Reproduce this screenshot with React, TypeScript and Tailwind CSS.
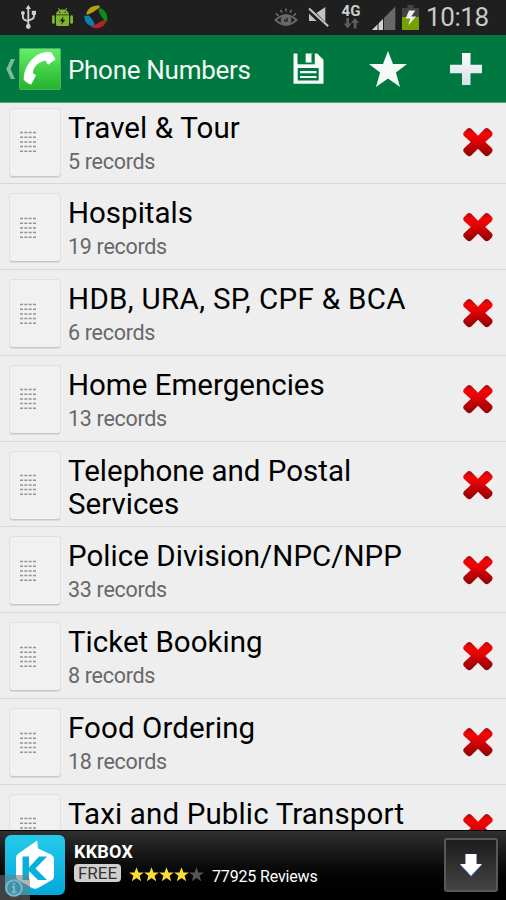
type Category = {
  title: string;
  records?: number;
  tracking?: string;
};

const CATEGORIES: Category[] = [
  { title: 'Travel & Tour', records: 5, tracking: 'tracking-[0.12px]' },
  { title: 'Hospitals', records: 19 },
  { title: 'HDB, URA, SP, CPF & BCA', records: 6, tracking: 'tracking-[0.34px]' },
  { title: 'Home Emergencies', records: 13 },
  { title: 'Telephone and Postal Services' },
  { title: 'Police Division/NPC/NPP', records: 33, tracking: 'tracking-[0.04px]' },
  { title: 'Ticket Booking', records: 8 },
  { title: 'Food Ordering', records: 18, tracking: 'tracking-[0.1px]' },
  { title: 'Taxi and Public Transport', tracking: 'tracking-[0.14px]' },
];

export default function App() {
  return (
    <div className="flex h-[900px] w-[506px] flex-col overflow-hidden bg-[#eeeeee] font-['Roboto',sans-serif]">
      <StatusBar />
      <ActionBar />
      <main className="min-h-0 flex-1 overflow-hidden">
        <ul className="-mt-[4.5px]">
          {CATEGORIES.map((c) => (
            <CategoryRow key={c.title} category={c} />
          ))}
        </ul>
      </main>
      <AdBanner />
    </div>
  );
}

function StatusBar() {
  return (
    <div className="flex h-[35px] shrink-0 items-start bg-[#1f1f1f]">
      {/* USB */}
      <svg className="mt-1 ml-5 h-[26px] w-[17px]" viewBox="0 0 17 26" fill="none" stroke="#cfcfcf">
        <path d="M8.3 4v18M2.9 10v3.2q0 2 2 2.8l3.4 1.5M13.9 10v2.6q0 2-2 2.6l-3.6 1.4" strokeWidth="1.9" />
        <path d="M8.3 .8 11 5H5.6z" fill="#cfcfcf" stroke="none" />
        <circle cx="8.3" cy="22.5" r="2.4" fill="#cfcfcf" stroke="none" />
        <circle cx="2.9" cy="9" r="1.9" fill="#cfcfcf" stroke="none" />
        <path d="M11.8 6.8h4.2v4h-4.2z" fill="#cfcfcf" stroke="none" />
      </svg>
      {/* Android battery helper */}
      <svg className="mt-2 ml-[15px] h-5 w-[21px]" viewBox="0 0 21 20" fill="#7fb52b">
        <path d="M4 6.5C4.2 3.6 6.8 1.5 10.5 1.5s6.3 2.1 6.5 5zM4 7.3h13v9.2q0 1.5-1.5 1.5h-10Q4 18 4 16.5z" />
        <rect x="0" y="7.3" width="2.8" height="8.5" rx="1.4" />
        <rect x="18.2" y="7.3" width="2.8" height="8.5" rx="1.4" />
        <path d="m6.3 0 1.5 2.5M14.7 0l-1.5 2.5" stroke="#7fb52b" />
        <circle cx="7.7" cy="4.3" r=".7" fill="#1f1f1f" />
        <circle cx="13.3" cy="4.3" r=".7" fill="#1f1f1f" />
        <path d="m11.4 8.5-3.6 4.7h2.3l-.8 3.6 4-5h-2.4z" fill="#172007" />
      </svg>
      {/* Colour swirl */}
      <svg className="mt-[5px] ml-[11px] h-6 w-6" viewBox="0 0 24 24">
        <path d="M2.3 9.5C3 3.5 8.5.2 15 .5c1.2.2 1 1.8-.2 2.700C10.500 5.500 7.500 9.300 2.300 9.500z" fill="#bd9d12" />
        <path d="M15.7 3.2c5.6 1 8.3 6.500 7.500 12-.4 1.600-2 1.800-2.900.5-1.700-3.600-4.400-5.400-5.500-9.800-.2-1.200.1-2.200.9-2.700z" fill="#0a8e19" />
        <path d="M.4 10.5c1.3 1 3.4-.6 4.900.4 2.600 1.900 3.400 4.600 5.100 7.500.9 1.700-.3 3-1.700 2.800C3.500 20.500-.2 16 .4 10.500z" fill="#0b80b0" />
        <path d="M20.5 15.5c1.700.5 1.500 2.500.1 4.100-3.200 3.800-8.900 4.800-12.900 2.600-.8-.6-.2-1.500.8-1.500 4.500-.2 7.200-5.200 12-5.200z" fill="#bb2226" />
      </svg>

      {/* Smart stay eye */}
      <svg className="mt-2 ml-auto h-5 w-6" viewBox="0 0 24 20" fill="none" stroke="#696969">
        <path d="M1.500 12Q12 2.500 22.500 12 12 21.500 1.500 12z" strokeWidth="1.8" />
        <circle cx="12" cy="11.8" r="3.7" strokeWidth="3.2" />
        <path d="m9.800 9.300 2.700 2.700M2 5.500l2.500 2.300M6.500 2 8 4.700M12 .5v3M17.500 2 16 4.700M22 5.500l-2.500 2.300" strokeWidth="1.7" />
      </svg>
      {/* Muted speaker */}
      <svg className="mt-[6px] ml-[9px] h-[23px] w-6" viewBox="0 0 24 23">
        <path d="M2 7h7.5l8.800-6v20l-8.800-6H2z" fill="#c2c2c2" />
        <path d="M.5 2 21 22.500" stroke="#1f1f1f" strokeWidth="5.500" />
        <path d="m2 2.500 19.200 17.700" stroke="#c2c2c2" strokeWidth="2.200" />
      </svg>
      <div className="mt-[5px] ml-[9px] flex w-[22px] flex-col items-center">
        <span className="text-[15px] leading-[13px] font-bold text-[#d0d0d0]">4G</span>
        <svg className="h-[11px] w-[15px]" viewBox="0 0 15 11" fill="#5d5d5d">
          <path d="M2.300 0h2.800v5.500h2.600L3.700 10.500-.3 5.500h2.600zM9.700 10.500h2.800V5h2.600L11 0 7 5h2.700z" />
        </svg>
      </div>
      {/* Signal */}
      <svg className="mt-[6px] ml-[10px] h-6 w-6" viewBox="0 0 24 24">
        <path d="M0 24 23.3.5V24z" fill="#686868" />
        <path d="M0 24 11 13v11z" fill="#d2d2d2" />
        <path d="M6 17v7M11.500 12v12" stroke="#1f1f1f" strokeWidth="1" />
      </svg>
      {/* Battery */}
      <svg className="mt-[5px] ml-[6px] h-[25px] w-[17px]" viewBox="0 0 17 25">
        <path d="M5.5 0h6v3H17v9H0V3h5.500z" fill="#434343" />
        <path d="M0 12h17v13H0z" fill="#75a202" />
        <path d="m7 5.500-3.300 8h4.600l-2 6.800 7.800-8.800H9.300l4-6z" fill="#eee" />
      </svg>
      <span className="mt-[4px] mr-[17px] ml-[7px] w-[63px] text-[26px] leading-[26px] tracking-[-0.4px] text-[#c9c9c9]">
        10:18
      </span>
    </div>
  );
}

function ActionBar() {
  return (
    <header className="flex h-[68px] shrink-0 items-center border-b border-[#5e9e7b] bg-[#007940]">
      <svg className="ml-[6px] h-5 w-[10px]" viewBox="0 0 10 20">
        <path d="M5 0h4L4.6 10 9 20H5L.3 10z" fill="#7ebb9e" />
      </svg>
      <svg className="mt-[1px] ml-[3px] h-[42px] w-[42px]" viewBox="0 0 42 42">
        <defs>
          <linearGradient id="call" x2="0" y2="1">
            <stop stopColor="#64f069" />
            <stop offset="1" stopColor="#24b22b" />
          </linearGradient>
        </defs>
        <rect x=".5" y=".5" width="41" height="41" rx="1" fill="url(#call)" stroke="#58a966" />
        {/* handset: thin curved grip with an ear piece at each end */}
        <path
          d="M5 28C5.500 19.500 12.500 9 21.500 5.500 25 4.200 29 3.600 32.500 4.400l4 7.100-7.500 5.300-2.700-4.300c-3.300.8-6.600 2.400-8.800 4.600-2.200 2.300-3.500 4.900-3.700 7.900l3.200 2.400-5 9.300c-2.500-.8-5.600-2.800-7.300-4.900q-.2-2 .3-3.800z"
          fill="#fff"
        />
      </svg>
      <h1 className="mt-[3px] ml-[7px] text-[26px] tracking-[-0.3px] text-[#f4f8f5]">Phone Numbers</h1>
      <div className="mr-[24px] ml-auto flex items-center">
        <svg className="mr-[1px] h-[31px] w-[31px]" viewBox="0 0 31 31">
          <path d="M.5.5h4.200V10h17V.5h2.500l6.300 6.300v24H.5z" fill="#f5faf8" />
          <path d="M12.500.5h7V10h-7z" fill="#f5faf8" />
          <path d="M4.700 0h7.600v9.500H4.700zM18.500 1h2.700v8h-2.700z" fill="#007940" />
          <path d="M4.700 9.500h17v1.800h-17z" fill="#007940" />
          <path d="M4.700 15h21v12.500h-21z" fill="#007940" />
          <path d="M7 19.200h16.500M7 24h16.500" stroke="#f5faf8" strokeWidth="2.200" />
        </svg>
        <svg className="ml-[44px] h-[36px] w-[38px]" viewBox="0 0 38 36">
          <path d="m19 0 5 13h14L26.900 21.600 31 36 19 27.500 7 36l4.100-14.400L0 13h14z" fill="#f5faf8" />
        </svg>
        <svg className="mt-[1px] ml-[43px] h-8 w-8" viewBox="0 0 32 32">
          <defs>
            <linearGradient id="plus" x2="0" y2="1">
              <stop stopColor="#fbfcfd" />
              <stop offset="1" stopColor="#d8e0e9" />
            </linearGradient>
          </defs>
          <path d="M12 0h8.500v11.800H32v8.500H20.500V32H12V20.300H0v-8.500h12z" fill="url(#plus)" />
        </svg>
      </div>
    </header>
  );
}

function CategoryRow({ category: c }: { category: Category }) {
  return (
    <li className="flex h-[85.8px] items-start overflow-hidden border-b border-[#d8d8d8]">
      <DragHandle />
      <div className="mt-[13px] ml-[7px] w-[350px] shrink-0">
        <div className={`text-[29.5px] leading-[33px] text-black ${c.tracking ?? ''}`}>{c.title}</div>
        {c.records !== undefined && (
          <div className="mt-[4px] text-[21.5px] leading-[26px] tracking-[-0.3px] text-[#686868]">
            {c.records} records
          </div>
        )}
      </div>
      <svg className="mt-[27px] mr-[12px] ml-auto h-8 w-8" viewBox="0 0 32 32">
        <defs>
          <linearGradient id="cross" x2="0" y2="1">
            <stop stopColor="#a80d10" />
            <stop offset=".2" stopColor="#f20606" />
            <stop offset=".4" stopColor="#e80406" />
            <stop offset=".65" stopColor="#bf0306" />
            <stop offset="1" stopColor="#900306" />
          </linearGradient>
        </defs>
        <path
          d="M2 6 5 3Q7.200 1 9.500 3L16 9.700 22.500 3Q24.800 1 27 3l3 3q1.700 2.200-.3 4.300L23.200 16l6.500 6q2 2.200.3 4.300l-3 2.900q-2.200 2-4.500 0L16 22.700l-6.500 6.500q-2.300 2-4.500 0l-3-2.900Q.3 24.200 2.300 22l6.500-6-6.500-5.700Q.3 8.200 2 6z"
          fill="url(#cross)"
        />
      </svg>
    </li>
  );
}

function DragHandle() {
  return (
    <div className="mt-[9px] ml-[9px] flex h-[69px] w-[52px] shrink-0 items-center rounded-[4px] border border-[#e0e0e0] border-b-[#c6c6c6] bg-[#f1f1f1] shadow-[0_1px_0_#dadada]">
      <svg className="ml-[10px] h-[22px] w-[16px]" viewBox="0 0 16 22" stroke="#949494" strokeWidth="1.5">
        {[1.5, 6.2, 10.9, 15.6, 20.3].map((y) => (
          <path key={y} d={`M0 ${y}h16`} strokeDasharray="3 1.33" />
        ))}
      </svg>
    </div>
  );
}

function AdBanner() {
  return (
    <footer className="relative flex h-[70px] shrink-0 items-start border-t border-black bg-linear-to-b from-[#303030] to-black text-white">
      <svg className="mt-[4px] ml-[5px] h-[60px] w-[60px]" viewBox="0 0 60 60">
        <defs>
          <linearGradient id="kk" x2="0" y2="1">
            <stop stopColor="#25caea" />
            <stop offset="1" stopColor="#02a9d9" />
          </linearGradient>
        </defs>
        <rect width="60" height="60" rx="6" fill="url(#kk)" />
        <path d="M32.200 5.500 33 13.500l13.500 6.200q2.500 1.300 2.500 4.300v17q0 3-2.500 4.300L33 53q-3 1.500-6 0l-13.500-7.700Q11 44 11 41V23q0-3 2.500-4.500z" fill="#fff" />
        <path d="M17.500 21.500h6.500v11L34 21.500h8L30.500 33.500 42 45h-9l-9-9v9h-6.500z" fill="#08b0dc" />
      </svg>
      <div className="mt-[10px] ml-[9px]">
        <div className="text-[18px] leading-[22px] font-bold tracking-[0.2px]">KKBOX</div>
        <div className="flex items-start">
          <span className="mt-[1px] h-[18px] w-[47px] rounded-[4px] bg-[#cfcfcf] text-center text-[17px] leading-[19px] text-[#333]">
            FREE
          </span>
          <div className="mt-[4px] ml-[8px] flex">
            {[0, 1, 2, 3, 4].map((n) => (
              <Star key={n} filled={n < 4} />
            ))}
          </div>
          <span className="mt-[4.500px] ml-[8px] text-[16px] leading-[18px] tracking-[-0.16px]">77925 Reviews</span>
        </div>
      </div>
      <div className="mt-[7px] mr-[8px] ml-auto flex h-[54px] w-[54px] items-center justify-center rounded-[3px] border-2 border-[#585858] bg-linear-to-b from-[#1d1d1d] to-[#444]">
        <svg className="h-6 w-6" viewBox="0 0 24 24">
          <path d="M6.500 2h11v10h5.500L12 24 1 12h5.500z" fill="#3c62c6" />
          <path d="M6.500 1h11v10h5.500L12 22.800 1 11h5.500z" fill="#fff" />
        </svg>
      </div>
      <InfoBadge />
    </footer>
  );
}

function Star({ filled }: { filled: boolean }) {
  return (
    <svg className="h-[15px] w-[15px]" viewBox="0 0 15 15">
      <path
        d="m7.500.2 2 5.200h5.300l-4.200 3.300 1.600 5.500-4.700-3.200-4.700 3.200 1.600-5.500L.2 5.400h5.300z"
        fill={filled ? '#fddc35' : '#555555'}
      />
    </svg>
  );
}

function InfoBadge() {
  return (
    <div className="absolute bottom-0 left-0 flex h-[25px] w-[30px] items-center rounded-tr-[6px] bg-[#777]/55">
      <svg className="ml-[5px] h-[18px] w-[18px]" viewBox="0 0 18 18" fill="none" stroke="#72b9cb">
        <circle cx="9" cy="9" r="7.8" strokeWidth="2" />
        <path d="M7 8h2v5M6.500 13.300h5M9 4v2.200" strokeWidth="2" />
      </svg>
    </div>
  );
}
